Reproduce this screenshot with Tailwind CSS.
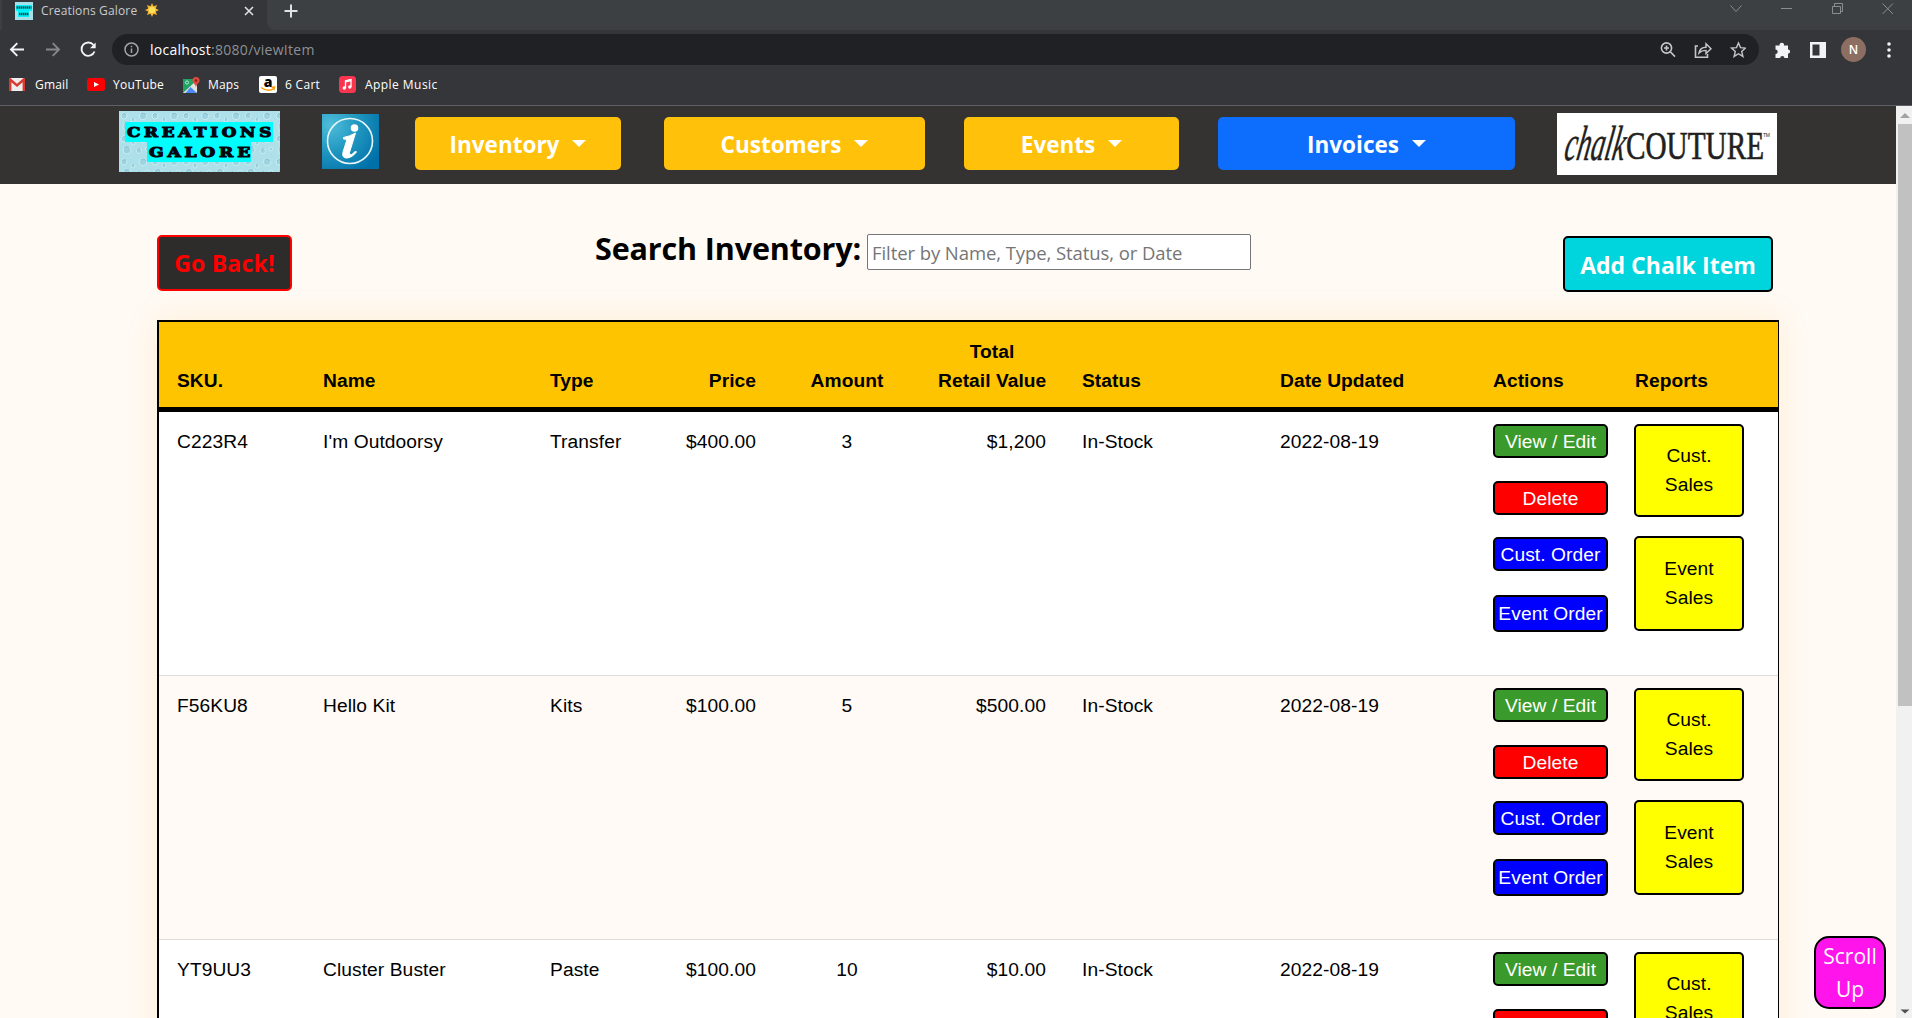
<!DOCTYPE html>
<html lang="en">
<head>
<meta charset="utf-8">
<title>Creations Galore</title>
<script src="https://cdn.jsdelivr.net/npm/@tailwindcss/browser@4"></script>
</head>
<body class="w-[1912px] h-[1018px] overflow-hidden bg-[#fffaf4] font-['Open_Sans',sans-serif] text-black flex flex-col">

<!-- Tab strip -->
<div class="h-[30px] shrink-0 bg-[#3c4043] flex text-[#c9cbce]">
  <div class="w-[2px] bg-[#3c4043] rounded-br-lg"></div>
  <div class="w-[265px] bg-[#35363a] flex items-start pl-[13px] text-[12px]">
    <svg class="w-[18px] h-[18px] mt-[2px]" viewBox="0 0 18 18"><rect width="18" height="18" fill="#a5dfe8"/><path d="M1 3h16v6H1zM3 9h11v6H3z" fill="#00f2f7"/><path d="M1.500 5.500h15M4 12h10" stroke="#06505a" stroke-width="2.600" stroke-dasharray="1.500 .5"/></svg>
    <span class="ml-[8px] leading-[21px] w-[98px] whitespace-nowrap tracking-[0.15px]">Creations Galore</span>
    <svg class="w-[14px] h-[14px] ml-[6px] mt-[3px]" viewBox="0 0 14 14"><path d="M7 0l1.500 3.200L12 2l-1.200 3.400L14 7l-3.200 1.500L12 12l-3.500-1.200L7 14l-1.500-3.200L2 12l1.200-3.500L0 7l3.200-1.600L2 2l3.500 1.200z" fill="#f4b52c"/><circle cx="7" cy="7" r="3.300" fill="#fde05a"/></svg>
    <svg class="w-[10px] h-[10px] ml-[85px] mt-[6px]" viewBox="0 0 10 10"><path d="M1 1l8 8M9 1L1 9" stroke="#dee1e6" stroke-width="1.600"/></svg>
  </div>
  <div class="bg-[#35363a] flex-1"><div class="h-full bg-[#3c4043] rounded-bl-lg flex">
    <svg class="w-[14px] h-[14px] ml-[17px] mt-[4px]" viewBox="0 0 14 14"><path d="M7 .5v13M.5 7h13" stroke="#dee1e6" stroke-width="2"/></svg>
    <div class="flex-1"></div>
    <svg class="w-[164px] h-[14px] mt-[2px] mr-[18px]" viewBox="0 0 164 14" fill="none" stroke="#8b8e90" stroke-width="1"><path d="M.5 3.500l5.500 6 5.500-6M51 6.500h11M102.500 4.500h8v7h-8zM104.500 4.500v-3h8v8h-2M152.500 1.500l10.500 10.500M163 1.500l-10.500 10.500"/></svg>
  </div></div>
</div>

<!-- Address bar -->
<div class="h-[38px] shrink-0 bg-[#35363a] flex items-center pt-[1px]">
  <svg class="w-[112px] h-[31px]" viewBox="0 0 112 31" fill="none" stroke-width="1.900">
    <path d="M24 15.500H11M17.300 9.200L11 15.500l6.300 6.300" stroke="#f1f3f4"/>
    <path d="M46 15.500h13M52.700 9.200l6.300 6.300-6.300 6.300" stroke="#85878a"/>
    <path d="M93.500 11A6.700 6.700 0 1 0 94.500 17.500" stroke="#f1f3f4"/><path d="M95.700 8.500v5.800H90z" fill="#f1f3f4"/>
  </svg>
  <div class="w-[1647px] h-[31px] rounded-full bg-[#202124] flex items-center">
    <svg class="w-[15px] h-[15px] ml-[12px]" viewBox="0 0 15 15" fill="none" stroke="#a1a5aa" stroke-width="1.500"><circle cx="7.500" cy="7.500" r="6.500"/><path d="M7.500 6.500v4.500M7.500 3.700v1.600"/></svg>
    <span class="ml-[11px] flex-1 text-[14px] tracking-[0.27px] text-white">localhost<span class="text-[#8d9094]">:8080/viewItem</span></span>
    <svg class="w-[86px] h-[20px] mr-[13px]" viewBox="0 0 86 20" fill="none" stroke="#c4c7ca" stroke-width="1.600">
      <circle cx="6.500" cy="8" r="5.100"/><path d="M10.300 11.800l4.700 4.800M6.500 5.500v5M4 8h5" />
      <path d="M38 6h-2.500v11.200h12V14" /><path d="M39 13c.8-4 3.500-5.700 7-5.700V3.800l5 5-5 4.800v-3.200c-3 0-5 .6-7 2.600z" stroke-width="1.400"/>
      <path d="M78.500 3l2 4.600 5 .5-3.800 3.300 1.200 5-4.400-2.700-4.400 2.700 1.200-5-3.800-3.300 5-.5z" stroke-width="1.400"/>
    </svg>
  </div>
  <svg class="w-[16px] h-[16px] ml-[16px]" viewBox="0 0 16 16" fill="#f1f3f4"><path d="M.5 3.500h4.200a2.200 2.200 0 1 1 4.200 0H13v4a2.100 2.100 0 1 1 0 4.200V16H9.400a2.100 2.100 0 0 0-4.200 0H.5v-4a2.200 2.200 0 0 0 0-4.400z"/></svg>
  <svg class="w-[16px] h-[16px] ml-[19px]" viewBox="0 0 16 16"><path d="M0 0h16v16H0zM2.500 2.500v11h7v-11z" fill="#f1f3f4" fill-rule="evenodd"/></svg>
  <div class="w-[25px] h-[25px] ml-[15px] rounded-full bg-[#8d6e63] text-white text-[12px] font-semibold flex items-center justify-center">N</div>
  <svg class="w-[4px] h-[16px] ml-[21px]" viewBox="0 0 4 16" fill="#f1f3f4"><circle cx="2" cy="2" r="1.800"/><circle cx="2" cy="8" r="1.800"/><circle cx="2" cy="14" r="1.800"/></svg>
</div>

<!-- Bookmarks -->
<div class="h-[38px] shrink-0 bg-[#35363a] border-b border-[#5f6064] flex items-center text-white text-[12px] pl-[9px] pb-[4px]">
  <svg class="w-[16px] h-[13px]" viewBox="0 0 16 13"><rect width="16" height="13" rx="1" fill="#eee"/><path d="M1.200 13V1.500L8 7.500l6.800-6V13" fill="none" stroke="#d93a30" stroke-width="2.400"/></svg>
  <span class="w-[33px] ml-[10px] whitespace-nowrap tracking-[0.2px]">Gmail</span>
  <svg class="w-[18px] h-[13px] ml-[19px]" viewBox="0 0 18 13"><rect width="18" height="13" rx="3" fill="#f00"/><path d="M7 4l5 2.500L7 9z" fill="#fff"/></svg>
  <span class="w-[51px] ml-[8px] whitespace-nowrap tracking-[0.25px]">YouTube</span>
  <svg class="w-[17px] h-[16px] ml-[19px]" viewBox="0 0 17 16"><path d="M0 2h14v14H0z" fill="#1fa463"/><path d="M0 16L14 3v13z" fill="#e5e3df"/><path d="M2.500 16l5-6 6.500 6z" fill="#4c8bf5"/><circle cx="4" cy="5.500" r="1.600" fill="none" stroke="#bfe5d2"/><path d="M13 0a3.600 3.600 0 0 1 3.600 3.600C16.600 6.500 13 7 13 11c0-4-3.600-4.500-3.600-7.400A3.600 3.600 0 0 1 13 0z" fill="#dd4b3e"/><circle cx="13" cy="3.600" r="1.300" fill="#822"/></svg>
  <span class="w-[34px] ml-[8px] whitespace-nowrap tracking-[0.15px]">Maps</span>
  <svg class="w-[18px] h-[17px] ml-[17px]" viewBox="0 0 18 17"><rect width="18" height="17" rx="2" fill="#fff"/><text x="9" y="11" text-anchor="middle" font-family="Open Sans" font-weight="800" font-size="14">a</text><path d="M2 11.500q7 5 13 1M12.500 11.500l3-.5-.7 3" stroke="#f90" stroke-width="1.500" fill="none"/></svg>
  <span class="w-[36px] ml-[8px] whitespace-nowrap tracking-[0.3px]">6 Cart</span>
  <svg class="w-[17px] h-[17px] ml-[18px]" viewBox="0 0 17 17"><rect width="17" height="17" rx="3.500" fill="#fa3550"/><path d="M6.500 12V4.800l5.500-1.200V11" stroke="#fff" stroke-width="1.300" fill="none"/><path d="M6.500 5.500l5.500-1.200" stroke="#fff" stroke-width="2"/><circle cx="5.300" cy="12" r="1.700" fill="#fff"/><circle cx="10.800" cy="11" r="1.700" fill="#fff"/></svg>
  <span class="ml-[9px] whitespace-nowrap tracking-[0.45px]">Apple Music</span>
</div>

<div class="flex flex-1 min-h-0">
  <div class="w-[1896px] flex flex-col relative overflow-hidden">
    <!-- Navigation -->
    <nav class="h-[78px] shrink-0 bg-[#343331] flex items-start text-white font-bold text-[22.5px]">
      <svg class="w-[161px] h-[61px] ml-[119px] mt-[5px]" viewBox="0 0 161 61">
        <defs><pattern id="drops" width="31" height="23" patternUnits="userSpaceOnUse"><rect width="31" height="23" fill="#aee0e9"/><g fill="#9bd3e0" stroke="#d3f0f4" stroke-width=".8"><circle cx="5" cy="5" r="3"/><circle cx="14" cy="9" r="2"/><circle cx="24" cy="5" r="3.600"/><circle cx="8" cy="16" r="4"/><circle cx="20" cy="17" r="2.500"/><circle cx="28" cy="15" r="1.800"/></g><g stroke="#78b9cd" fill="none" stroke-width=".8"><path d="M3 4a3 3 0 0 1 4-1M22 3a3 3 0 0 1 5 1M5 14a4 4 0 0 1 5-1M18 16l3-2M13 8l2-1"/></g></pattern></defs>
        <rect width="161" height="61" fill="url(#drops)"/>
        <path d="M6 11h148v20h-22v20H28V31H6z" fill="#0ff"/>
        <g font-family="DejaVu Serif" font-weight="bold" font-size="13.500" letter-spacing="3" fill="#06060e" stroke="#06060e" stroke-width="1.100"><text x="8" y="25.500" textLength="148" lengthAdjust="spacingAndGlyphs">CREATIONS</text><text x="30" y="45.500" textLength="105" lengthAdjust="spacingAndGlyphs">GALORE</text></g>
      </svg>
      <svg class="w-[57px] h-[55px] ml-[42px] mt-[8px]" viewBox="0 0 57 55">
        <defs><radialGradient id="blue" cx=".15" cy=".2" r="1"><stop offset="0" stop-color="#4fbdda"/><stop offset=".45" stop-color="#2399c2"/><stop offset="1" stop-color="#0070a8"/></radialGradient></defs>
        <rect width="57" height="55" fill="url(#blue)"/><circle cx="28" cy="27" r="22.500" fill="none" stroke="#e8f6fa" stroke-width="1.600"/>
        <circle cx="32.500" cy="14" r="3.800" fill="#fff"/><path d="M21.500 23.500q6-1 12-4.500l-6 19.500q-.6 3 2 2 2-1 4-3.500l1 1q-4 5.500-9 6-6 .5-4.500-6l3.500-11q.5-2.500-3-2z" fill="#fff" stroke="#fff" stroke-width="1"/>
      </svg>
      <div class="w-[206px] h-[53px] ml-[36px] mt-[11px] pt-[2px] rounded-[5px] bg-[#ffc10a] flex items-center justify-center gap-[13px]"><span>Inventory</span><i class="border-x-[7px] border-x-transparent border-t-[7px] border-t-white mb-[3px]"></i></div>
      <div class="w-[261px] h-[53px] ml-[43px] mt-[11px] pt-[2px] rounded-[5px] bg-[#ffc10a] flex items-center justify-center gap-[13px]"><span>Customers</span><i class="border-x-[7px] border-x-transparent border-t-[7px] border-t-white mb-[3px]"></i></div>
      <div class="w-[215px] h-[53px] ml-[39px] mt-[11px] pt-[2px] rounded-[5px] bg-[#ffc10a] flex items-center justify-center gap-[13px]"><span>Events</span><i class="border-x-[7px] border-x-transparent border-t-[7px] border-t-white mb-[3px]"></i></div>
      <div class="w-[297px] h-[53px] ml-[39px] mt-[11px] pt-[2px] rounded-[5px] bg-[#0d6efd] flex items-center justify-center gap-[13px]"><span>Invoices</span><i class="border-x-[7px] border-x-transparent border-t-[7px] border-t-white mb-[3px]"></i></div>
      <svg class="w-[220px] h-[62px] ml-[42px] mt-[7px]" viewBox="0 0 220 62" fill="#231f20" font-family="Liberation Serif">
        <rect width="220" height="62" fill="#fff"/>
        <g transform="translate(6 47) skewX(-10) scale(1 1.500)"><text font-style="italic" font-size="33" font-weight="400" textLength="60" lengthAdjust="spacingAndGlyphs" stroke="#231f20" stroke-width=".3">chalk</text></g>
        <g transform="translate(69 46) scale(1 1.280)"><text font-size="30.500" font-weight="400" textLength="138" lengthAdjust="spacingAndGlyphs" stroke="#231f20" stroke-width=".5">COUTURE</text></g>
        <text x="206" y="24" font-family="Liberation Sans" font-weight="400" font-size="5" textLength="7">TM</text>
      </svg>
    </nav>

    <!-- Toolbar -->
    <div class="h-[136px] shrink-0 flex items-start pl-[157px]">
      <div class="w-[135px] h-[56px] mt-[51px] pt-[1px] rounded-[5px] border-2 border-[#f00] bg-[#2d2c2a] text-[#f00] font-bold text-[23px] tracking-[0.2px] flex items-center justify-center whitespace-nowrap">Go Back!</div>
      <div class="w-[268px] ml-[303px] mt-[42px] text-[30.500px] leading-[44px] font-bold whitespace-nowrap tracking-[-0.13px]">Search Inventory:</div>
      <div class="w-[384px] h-[36px] ml-[4px] mt-[50px] rounded-[2px] border border-[#767676] bg-white text-[#757575] text-[18.500px] pl-[4px] leading-[36px] tracking-[-0.08px] whitespace-nowrap">Filter by Name, Type, Status, or Date</div>
      <div class="w-[210px] h-[56px] ml-[312px] mt-[52px] pt-[2px] rounded-[5px] border-2 border-black bg-[#00d4dc] text-white font-bold text-[23px] flex items-center justify-center whitespace-nowrap">Add Chalk Item</div>
    </div>

    <!-- Inventory table -->
    <div id="table" class="w-[1622px] h-[900px] shrink-0 ml-[157px] border-t-2 border-l-2 border-r border-black bg-white shadow-[0_0_30px_rgba(255,165,40,0.15)] font-['Liberation_Sans',Arial,sans-serif] text-[19.2px] leading-[28.8px]">
      <div class="h-[90px] bg-[#ffc400] border-b-[5px] border-black pb-[11px] font-bold tracking-[0.05px] grid items-end grid-cols-[146px_227px_135px_107px_146px_144px_198px_213px_142px_161px] *:px-[18px]">
        <div>SKU.</div><div>Name</div><div>Type</div><div class="text-right">Price</div><div class="text-center">Amount</div><div class="text-center whitespace-nowrap">Total<br>Retail Value</div><div>Status</div><div>Date Updated</div><div>Actions</div><div>Reports</div>
      </div>
    </div>

    <div class="absolute left-[1814px] top-[830px] w-[72px] h-[73px] rounded-[15px] border-2 border-black bg-[#ff14eb] text-white text-[21px] leading-[33px] text-center pt-[2px]">Scroll Up</div>
  </div>

  <!-- Scrollbar -->
  <div class="w-[16px] bg-[#f1f1f1] flex flex-col items-end">
    <svg class="w-[14px] h-[18px]" viewBox="0 0 14 18"><path d="M2 12l5-5 5 5z" fill="#a3a3a3"/></svg>
    <div class="w-[14px] h-[582px] bg-[#c1c1c1]"></div>
    <div class="flex-1"></div>
    <svg class="w-[14px] h-[14px]" viewBox="0 0 14 14"><path d="M2.500 5.500h9l-4.500 4z" fill="#505050"/></svg>
  </div>
</div>

<template id="row">
  <div class="h-[264px] border-b border-[#dddddd] even:bg-white odd:bg-[#fffaf5] tracking-[0.08px] grid grid-cols-[146px_227px_135px_107px_146px_144px_198px_213px_142px_161px] pt-[12px] *:px-[18px]">
    <div class="pt-[4px]"></div><div class="pt-[4px]"></div><div class="pt-[4px]"></div><div class="pt-[4px] text-right"></div><div class="pt-[4px] text-center"></div><div class="pt-[4px] text-right"></div><div class="pt-[4px]"></div><div class="pt-[4px]"></div>
    <div class="text-white text-center whitespace-nowrap *:w-[115px] *:border-2 *:border-black *:rounded-[5px] *:flex *:items-center *:justify-center *:pt-[2px]">
      <div class="h-[34px] bg-[#3a9a2c]">View / Edit</div>
      <div class="h-[34px] mt-[23px] bg-[#f00]">Delete</div>
      <div class="h-[34px] mt-[22px] bg-[#00f]">Cust. Order</div>
      <div class="h-[37px] mt-[24px] bg-[#00f]">Event Order</div>
    </div>
    <div class="text-center *:w-[110px] *:border-2 *:border-black *:rounded-[5px] *:bg-[#ff0] *:-ml-px">
      <div class="h-[93px] pt-[16px]">Cust.<br>Sales</div>
      <div class="h-[95px] mt-[19px] pt-[17px]">Event<br>Sales</div>
    </div>
  </div>
</template>
<script>
const items = [
  ["C223R4", "I'm Outdoorsy", "Transfer", "$400.00", "3", "$1,200", "In-Stock", "2022-08-19"],
  ["F56KU8", "Hello Kit", "Kits", "$100.00", "5", "$500.00", "In-Stock", "2022-08-19"],
  ["YT9UU3", "Cluster Buster", "Paste", "$100.00", "10", "$10.00", "In-Stock", "2022-08-19"]
];
const table = document.getElementById("table");
for (const item of items) {
  const row = document.getElementById("row").content.cloneNode(true);
  const cells = row.firstElementChild.children;
  item.forEach((value, i) => { cells[i].textContent = value; });
  table.appendChild(row);
}
</script>
</body>
</html>
